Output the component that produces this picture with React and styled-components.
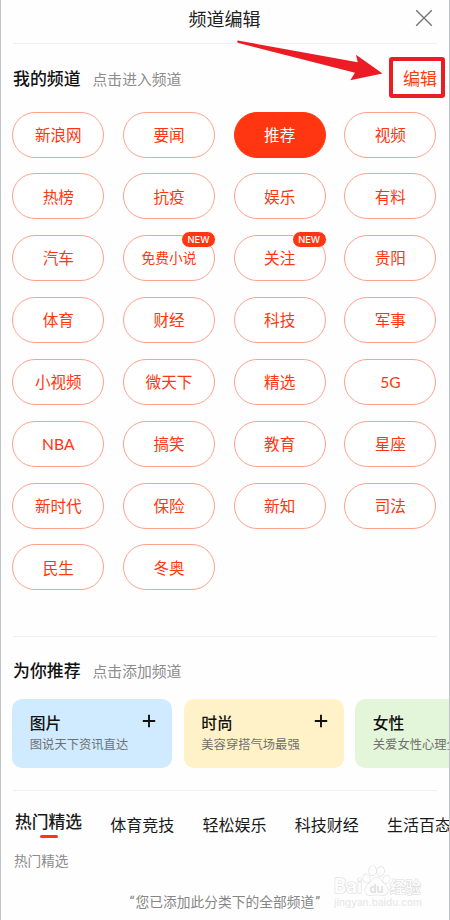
import React from 'react';
import styled, { createGlobalStyle } from 'styled-components';

const GlobalStyle = createGlobalStyle`
* {
  box-sizing: border-box;
}
body {
  margin: 0;
  background: #fff;
  font-family: "Noto Sans CJK SC", sans-serif;
}
`
const Page = styled.div`
position: relative;
display: flex;
flex-direction: column;
width: 450px;
height: 920px;
overflow: hidden;
background: #fefefe;
border-left: 1px solid #bfc3cb;
border-right: 1px solid #bfc3cb;
`
const Header = styled.header`
display: grid;
grid-template-columns: 1fr auto 1fr;
align-items: center;
height: 43px;
padding: 0 16px 7px 15px;
flex: none;
`
const HeaderTitle = styled.h1`
grid-column: 2;
margin: 0;
font-size: 18px;
line-height: 26px;
font-weight: 400;
color: #222;
`
const CloseIcon = styled.svg`
justify-self: end;
width: 18px;
height: 18px;
fill: none;
stroke: #777;
stroke-width: 1.4;
`
const Divider = styled.div`
flex: none;
height: 1px;
margin: 0 12px;
background: #f0f0f0;
`
const SectionHead = styled.div`
display: flex;
align-items: center;
flex: none;
height: ${props => props.$height}px;
padding: ${props => props.$shift || 0}px 12px 0;
`
const SectionTitle = styled.h2`
margin: 0 12px 0 0;
font-size: 16.9px;
line-height: 24px;
font-weight: 500;
color: #111;
`
const Hint = styled.span`
font-size: 14.8px;
line-height: 20px;
padding-top: 2px;
color: #8c8c8c;
`
const EditButton = styled.button`
display: flex;
align-items: center;
justify-content: flex-end;
width: 56px;
height: 41px;
margin: -1px -8px 0 auto;
padding: 0 4px 0 0;
border: 4px solid #ec1c24;
border-radius: 3px;
background: none;
color: #ff3b12;
font-family: inherit;
font-size: 17px;
line-height: 24px;
`
const Arrow = styled.svg`
position: absolute;
left: 234px;
top: 38px;
width: 150px;
height: 46px;
fill: #ec1c24;
`
const ChannelGrid = styled.div`
display: grid;
grid-template-columns: repeat(4, 92px);
grid-auto-rows: 46px;
column-gap: 18.7px;
row-gap: 15.85px;
flex: none;
height: 524px;
padding-left: 11.3px;
`
const Channel = styled.div`
position: relative;
display: flex;
align-items: center;
justify-content: center;
border: 1px solid ${props => props.$active ? '#ff3610' : '#ffa08c'};
border-radius: 23px;
background: ${props => props.$active ? '#ff3610' : '#fff'};
color: ${props => props.$active ? '#fff' : '#ff3610'};
font-family: Lato, "Noto Sans CJK SC", sans-serif;
font-size: ${props => props.$small ? '13.7px' : '15.6px'};
line-height: 22px;
padding-top: 0.5px;
`
const NewBadge = styled.span`
position: absolute;
right: -2px;
top: -5px;
width: 35px;
height: 17px;
border: 1px solid #fff;
border-radius: 9px;
background: #ff3610;
color: #fff;
font-family: Inter, sans-serif;
font-size: 9.3px;
font-weight: 500;
line-height: 15px;
text-align: center;
`
const CardRow = styled.div`
display: flex;
gap: 11.5px;
flex: none;
height: 91px;
padding-left: 11.3px;
`
const Card = styled.article`
flex: none;
width: 160px;
height: 68.5px;
padding: 12px 16px 0 17.5px;
border-radius: 10px;
background: ${props => props.$color};
`
const CardTop = styled.div`
display: flex;
justify-content: space-between;
height: 23px;
`
const CardTitle = styled.h3`
margin: 0;
font-size: 15.8px;
line-height: 23px;
font-weight: 500;
color: #111;
`
const PlusIcon = styled.svg`
width: 14px;
height: 14px;
margin-top: 3px;
fill: none;
stroke: #111;
stroke-width: 1.9;
`
const CardText = styled.p`
margin: 1px 0 0;
font-size: 12.3px;
line-height: 18px;
white-space: nowrap;
color: #707070;
`
const Tabs = styled.nav`
display: flex;
flex: none;
height: 57px;
padding: 18px 0 0 14px;
gap: 28.2px;
`
const Tab = styled.div`
position: relative;
flex: none;
height: 26px;
font-size: ${props => props.$active ? '16.8px' : '16px'};
line-height: 24px;
font-weight: ${props => props.$active ? 500 : 400};
color: #1a1a1a;
padding-top: ${props => props.$active ? 0 : 3}px;
&::after {
  content: '';
  display: ${props => props.$active ? 'block' : 'none'};
  position: absolute;
  left: 24.5px;
  top: 26px;
  width: 18px;
  height: 3px;
  border-radius: 2px;
  background: #ff3610;
}
`
const SubTitle = styled.div`
flex: none;
padding-left: 13px;
font-size: 13.6px;
line-height: 24px;
color: #8c8c8c;
`
const EmptyText = styled.div`
flex: none;
margin-top: 18px;
padding-left: 127.5px;
font-size: 13.75px;
line-height: 22px;
color: #868686;
`
const Quote = styled.span`
font-family: Roboto, sans-serif;
padding: 0 1px;
`
const Watermark = styled.svg`
position: absolute;
left: 329px;
top: 860px;
width: 100px;
height: 52px;
fill: #fdfdfd;
stroke: #dcdcdc;
stroke-width: 1.2;
paint-order: stroke;
`

const channels = [
    { name: '新浪网' }, { name: '要闻' }, { name: '推荐', active: true }, { name: '视频' },
    { name: '热榜' }, { name: '抗疫' }, { name: '娱乐' }, { name: '有料' },
    { name: '汽车' }, { name: '免费小说', isNew: true }, { name: '关注', isNew: true }, { name: '贵阳' },
    { name: '体育' }, { name: '财经' }, { name: '科技' }, { name: '军事' },
    { name: '小视频' }, { name: '微天下' }, { name: '精选' }, { name: '5G' },
    { name: 'NBA' }, { name: '搞笑' }, { name: '教育' }, { name: '星座' },
    { name: '新时代' }, { name: '保险' }, { name: '新知' }, { name: '司法' },
    { name: '民生' }, { name: '冬奥' },
]

const cards = [
    { title: '图片', text: '图说天下资讯直达', color: '#d0ebff' },
    { title: '时尚', text: '美容穿搭气场最强', color: '#fff1c8' },
    { title: '女性', text: '关爱女性心理全', color: '#e4f6d9' },
]

const tabs = ['热门精选', '体育竞技', '轻松娱乐', '科技财经', '生活百态']

function BaiduMark() {
    return (
        <Watermark viewBox="0 0 100 52">
            <text x="4" y="33" fontFamily="Inter, sans-serif" fontWeight="700" fontSize="20" textLength="28" lengthAdjust="spacingAndGlyphs">Bai</text>
            <ellipse cx="36.5" cy="18.500" rx="3.300" ry="4.200" transform="rotate(-15 36.5 18.5)" />
            <ellipse cx="42.5" cy="10.800" rx="3.600" ry="4.800" />
            <ellipse cx="50.5" cy="11.500" rx="3.600" ry="4.600" transform="rotate(15 50.5 11.5)" />
            <ellipse cx="56.5" cy="19.500" rx="3.300" ry="4" transform="rotate(20 56.5 19.5)" />
            <path d="M46.500 17.500c-3 0-4.500 2.500-6.500 5-2.500 2.500-5 4.500-5 7.500 0 3.500 3 5.300 5.500 5 4-.5 8-.5 12 0 3 .3 5.500-1.500 5.500-5 0-3-2.500-5-5-7.500-2-2.500-3.500-5-6.500-5z" />
            <text x="39.500" y="32.500" fontFamily="Inter, sans-serif" fontWeight="600" fontSize="12" textLength="14" lengthAdjust="spacingAndGlyphs" fill="#dedede" stroke="none">du</text>
            <text x="60" y="33" fontFamily="Noto Sans CJK SC, sans-serif" fontWeight="500" fontSize="15.500">经验</text>
            <text x="4" y="46" fontFamily="Inter, sans-serif" fontWeight="500" fontSize="10" textLength="88" lengthAdjust="spacingAndGlyphs" fill="#e8e8e8" stroke="none">jingyan.baidu.com</text>
        </Watermark>
    )
}

function App() {
    return (
        <Page>
            <GlobalStyle />
            <Header>
                <HeaderTitle>频道编辑</HeaderTitle>
                <CloseIcon viewBox="0 0 18 18"><path d="M1.200 1.200l15.600 15.600M16.800 1.200L1.200 16.800" /></CloseIcon>
            </Header>
            <Divider />
            <SectionHead $height={67.500} $shift={1}>
                <SectionTitle>我的频道</SectionTitle>
                <Hint>点击进入频道</Hint>
                <EditButton>编辑</EditButton>
            </SectionHead>
            <ChannelGrid>
                {channels.map(channel => (
                    <Channel key={channel.name} $active={channel.active} $small={channel.name.length > 3}>
                        {channel.name}
                        {channel.isNew && <NewBadge>NEW</NewBadge>}
                    </Channel>
                ))}
            </ChannelGrid>
            <Divider />
            <SectionHead $height={62.500} $shift={5}>
                <SectionTitle>为你推荐</SectionTitle>
                <Hint>点击添加频道</Hint>
            </SectionHead>
            <CardRow>
                {cards.map(card => (
                    <Card key={card.title} $color={card.color}>
                        <CardTop>
                            <CardTitle>{card.title}</CardTitle>
                            <PlusIcon viewBox="0 0 14 14"><path d="M7 .8v12.400M.8 7h12.400" /></PlusIcon>
                        </CardTop>
                        <CardText>{card.text}</CardText>
                    </Card>
                ))}
            </CardRow>
            <Divider />
            <Tabs>
                {tabs.map((tab, index) => <Tab key={tab} $active={index === 0}>{tab}</Tab>)}
            </Tabs>
            <SubTitle>热门精选</SubTitle>
            <EmptyText><Quote>“</Quote>您已添加此分类下的全部频道<Quote>”</Quote></EmptyText>
            <Arrow viewBox="0 0 150 46">
                <path d="M2.500 2.700Q1.500 4.500 3.500 5L120 34.700L115.300 42.300L147.500 35.500L121 16.700L122.700 24.300L4 2.700Q3 2.300 2.500 2.700z" />
            </Arrow>
            <BaiduMark />
        </Page>
    )
}

export default App;
